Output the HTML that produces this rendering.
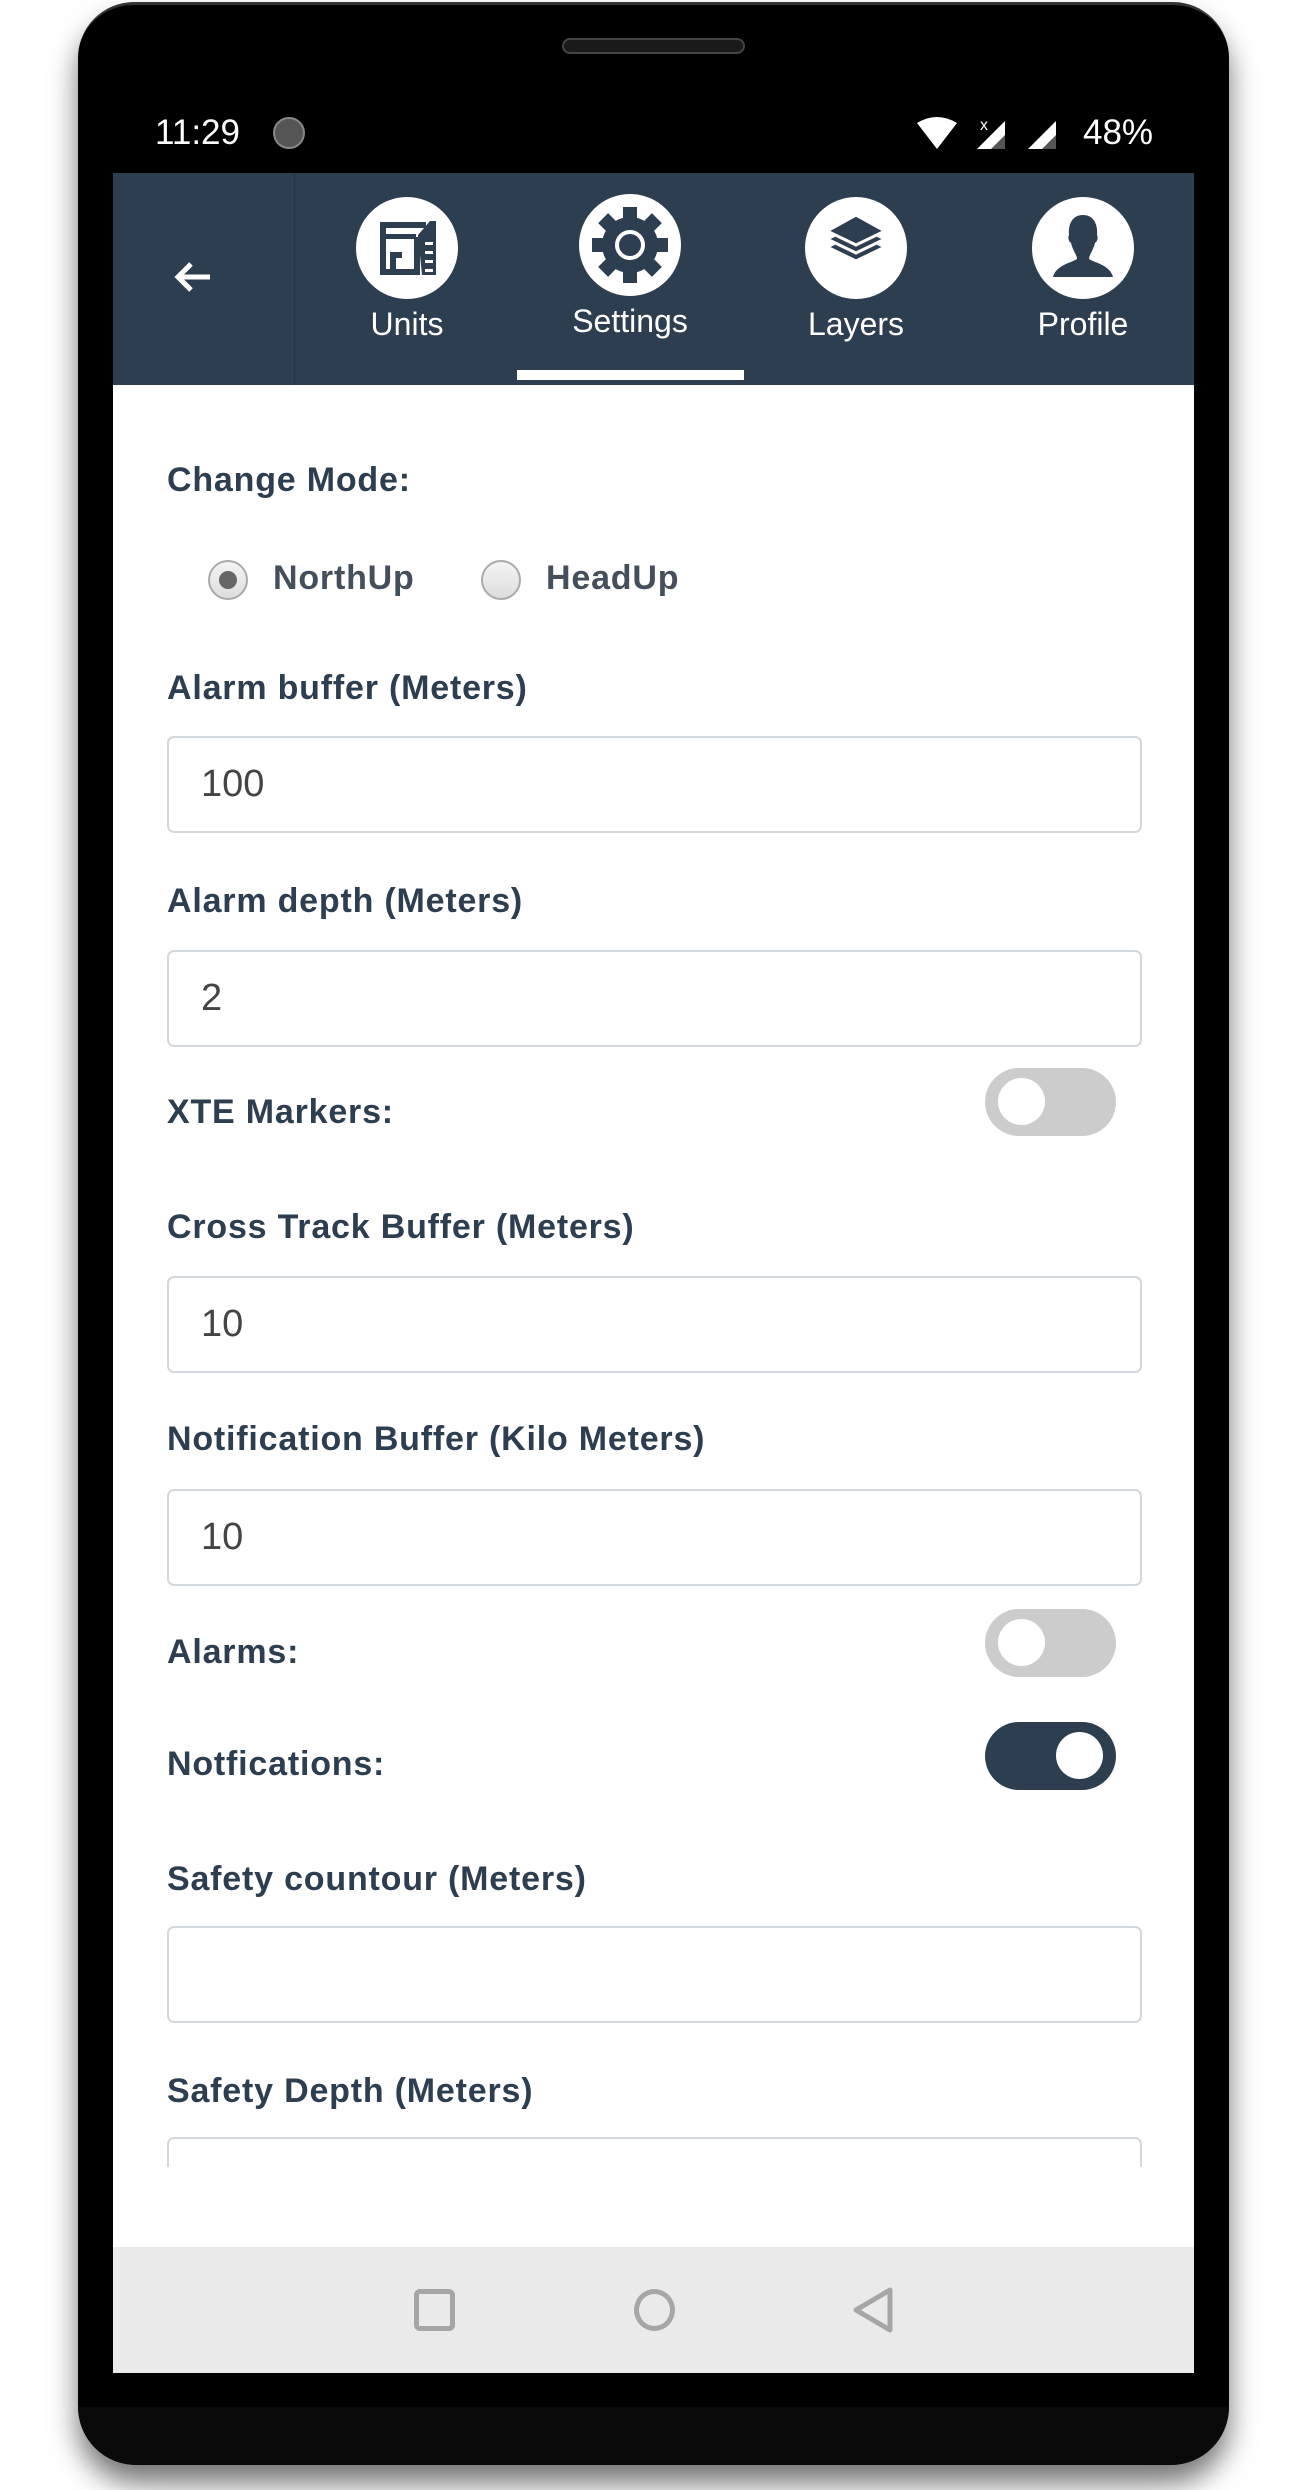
<!DOCTYPE html>
<html><head><meta charset="utf-8"><style>
*{margin:0;padding:0;box-sizing:border-box}
body{width:1305px;height:2490px;background:#fff;position:relative;overflow:hidden;font-family:"Liberation Sans",sans-serif}
.abs{position:absolute}
.phone{left:78px;top:2px;width:1151px;height:2463px;background:#000;border-radius:56px 56px 60px 60px;box-shadow:0 18px 28px rgba(0,0,0,.55);border-top:3px solid #333}
.chin{left:78px;top:2407px;width:1151px;height:58px;background:#0a0a0a;border-radius:0 0 60px 60px}
.screen{left:113px;top:173px;width:1081px;height:2200px;background:#fff;overflow:hidden}
.hdr{left:0;top:0;width:1081px;height:212px;background:#2e3e51}
.lbl{position:absolute;left:54px;font-weight:bold;font-size:34px;line-height:30px;color:#2e3e51;letter-spacing:0.8px;white-space:nowrap}
.inp{position:absolute;left:54px;width:975px;height:97px;border:2px solid #d3d7de;border-radius:7px;font-size:38px;color:#444;padding-left:32px;line-height:93px}
.tg{position:absolute;left:872px;width:131px;height:68px;border-radius:34px;background:#cccccc}
.tg i{position:absolute;top:10px;left:13px;width:47px;height:47px;border-radius:50%;background:#fff}
.tg.on{background:#2e3e51}.tg.on i{left:auto;right:13px}
.tab{position:absolute;width:200px;text-align:center;color:#fff;font-size:32px;line-height:32px}
.ic{position:absolute;width:102px;height:102px}
</style></head><body>
<div class="abs phone"></div>
<div class="abs chin"></div>
<div class="abs" style="left:562px;top:38px;width:183px;height:16px;border-radius:8px;background:#1a1a1a;border:2px solid #444"></div>
<div class="abs" style="left:155px;top:113px;color:#fff;font-size:35px;line-height:40px">11:29</div>
<div class="abs" style="left:273px;top:117px;width:32px;height:32px;border-radius:50%;background:#555;border:2px solid #888"></div>
<svg class="abs" style="left:915px;top:115px" width="240" height="40" viewBox="0 0 240 40">
<path d="M2 8 Q22 -4 42 8 L22 34 Z" fill="#fff"/>
<path d="M62 34 L90 6 L90 34 Z" fill="#fff"/><path d="M76 34 L90 20 L90 34Z" fill="#555"/>
<text x="65" y="15" fill="#fff" font-size="16" font-family="Liberation Sans">x</text>
<path d="M113 34 L141 6 L141 34 Z" fill="#fff"/><path d="M127 34 L141 20 L141 34Z" fill="#555"/>
</svg>
<div class="abs" style="left:1083px;top:113px;color:#fff;font-size:35px;line-height:40px">48%</div>

<div class="abs screen">
 <div class="abs hdr">
  <div class="abs" style="left:181px;top:0;width:1px;height:212px;background:#263445"></div>
  <svg class="abs" style="left:61px;top:87px" width="38" height="34" viewBox="0 0 38 34"><path d="M36 17 H5 M17 4 L4 17 L17 30" stroke="#fff" stroke-width="5" fill="none"/></svg>
  <svg class="ic" style="left:243px;top:24px" viewBox="0 0 102 102"><circle cx="51" cy="51" r="51" fill="#fff"/>
   <g fill="#2e3e51"><rect x="24" y="25" width="46" height="6"/><rect x="24" y="25" width="6" height="14"/><rect x="24" y="37" width="36" height="5"/><rect x="24" y="42" width="6" height="34"/><rect x="24" y="72" width="40" height="6"/><rect x="34" y="55" width="6" height="20"/><rect x="34" y="55" width="12" height="6"/><rect x="58" y="40" width="6" height="38"/><path d="M62 38 L74 24 L80 24 L80 78 L66 78 Z"/></g>
   <g fill="#fff"><rect x="69" y="45" width="8" height="3"/><rect x="69" y="54" width="8" height="3"/><rect x="69" y="63" width="8" height="3"/><rect x="69" y="72" width="8" height="3"/></g></svg>
  <svg class="ic" style="left:466px;top:21px" viewBox="0 0 102 102"><circle cx="51" cy="51" r="51" fill="#fff"/>
   <g fill="#2e3e51" transform="translate(51 51)"><circle r="28"/><g id="t"><rect x="-7" y="-38" width="14" height="14"/></g><use href="#t" transform="rotate(45)"/><use href="#t" transform="rotate(90)"/><use href="#t" transform="rotate(135)"/><use href="#t" transform="rotate(180)"/><use href="#t" transform="rotate(225)"/><use href="#t" transform="rotate(270)"/><use href="#t" transform="rotate(315)"/></g>
   <circle cx="51" cy="51" r="13" fill="none" stroke="#fff" stroke-width="4"/></svg>
  <svg class="ic" style="left:692px;top:24px" viewBox="0 0 102 102"><circle cx="51" cy="51" r="51" fill="#fff"/>
   <g fill="#2e3e51" stroke="#fff" stroke-width="3"><path d="M51 64 L22 50 L51 36 L80 50Z"/><path d="M51 56 L22 42 L51 28 L80 42Z"/><path d="M51 48 L22 34 L51 18 L80 34Z"/></g></svg>
  <svg class="ic" style="left:919px;top:24px" viewBox="0 0 102 102"><circle cx="51" cy="51" r="51" fill="#fff"/>
   <path fill="#2e3e51" d="M51 18 C62 18 66 28 65 38 C66 40 66 44 63 46 C61 54 57 58 57 62 C63 66 78 68 81 80 L21 80 C24 68 39 66 45 62 C45 58 41 54 39 46 C36 44 36 40 37 38 C36 28 40 18 51 18Z"/></svg>
  <div class="tab" style="left:194px;top:135px">Units</div>
  <div class="tab" style="left:417px;top:132px">Settings</div>
  <div class="tab" style="left:643px;top:135px">Layers</div>
  <div class="tab" style="left:870px;top:135px">Profile</div>
  <div class="abs" style="left:404px;top:197px;width:227px;height:10px;background:#fff"></div>
 </div>

 <div class="lbl" style="top:292px">Change Mode:</div>
 <div class="abs" style="left:95px;top:387px;width:40px;height:40px;border-radius:50%;border:2px solid #aaa;background:linear-gradient(#f4f4f4,#ddd)"></div>
 <div class="abs" style="left:106px;top:398px;width:18px;height:18px;border-radius:50%;background:#666"></div>
 <div class="lbl" style="left:160px;top:390px;color:#454f5b">NorthUp</div>
 <div class="abs" style="left:368px;top:387px;width:40px;height:40px;border-radius:50%;border:2px solid #aaa;background:linear-gradient(#f4f4f4,#ddd)"></div>
 <div class="lbl" style="left:433px;top:390px;color:#454f5b">HeadUp</div>

 <div class="lbl" style="top:500px">Alarm buffer (Meters)</div>
 <div class="inp" style="top:563px">100</div>
 <div class="lbl" style="top:713px">Alarm depth (Meters)</div>
 <div class="inp" style="top:777px">2</div>
 <div class="lbl" style="top:924px">XTE Markers:</div>
 <div class="tg" style="top:895px"><i></i></div>
 <div class="lbl" style="top:1039px">Cross Track Buffer (Meters)</div>
 <div class="inp" style="top:1103px">10</div>
 <div class="lbl" style="top:1251px">Notification Buffer (Kilo Meters)</div>
 <div class="inp" style="top:1316px">10</div>
 <div class="lbl" style="top:1464px">Alarms:</div>
 <div class="tg" style="top:1436px"><i></i></div>
 <div class="lbl" style="top:1576px">Notfications:</div>
 <div class="tg on" style="top:1549px"><i></i></div>
 <div class="lbl" style="top:1691px">Safety countour (Meters)</div>
 <div class="inp" style="top:1753px"></div>
 <div class="lbl" style="top:1903px">Safety Depth (Meters)</div>
 <div class="abs" style="left:0;top:1964px;width:1081px;height:30px;overflow:hidden"><div class="inp" style="top:0"></div></div>

 <div class="abs" style="left:0;top:2074px;width:1081px;height:126px;background:#eaeaea">
  <div class="abs" style="left:301px;top:42px;width:41px;height:42px;border:5px solid #a6a6a6;border-radius:6px"></div>
  <div class="abs" style="left:521px;top:42px;width:41px;height:42px;border:5px solid #a6a6a6;border-radius:50%"></div>
  <svg class="abs" style="left:738px;top:40px" width="44" height="46" viewBox="0 0 44 46"><path d="M39 3 L5 23 L39 43 Z" fill="none" stroke="#a6a6a6" stroke-width="5" stroke-linejoin="round"/></svg>
 </div>
</div>
</body></html>
